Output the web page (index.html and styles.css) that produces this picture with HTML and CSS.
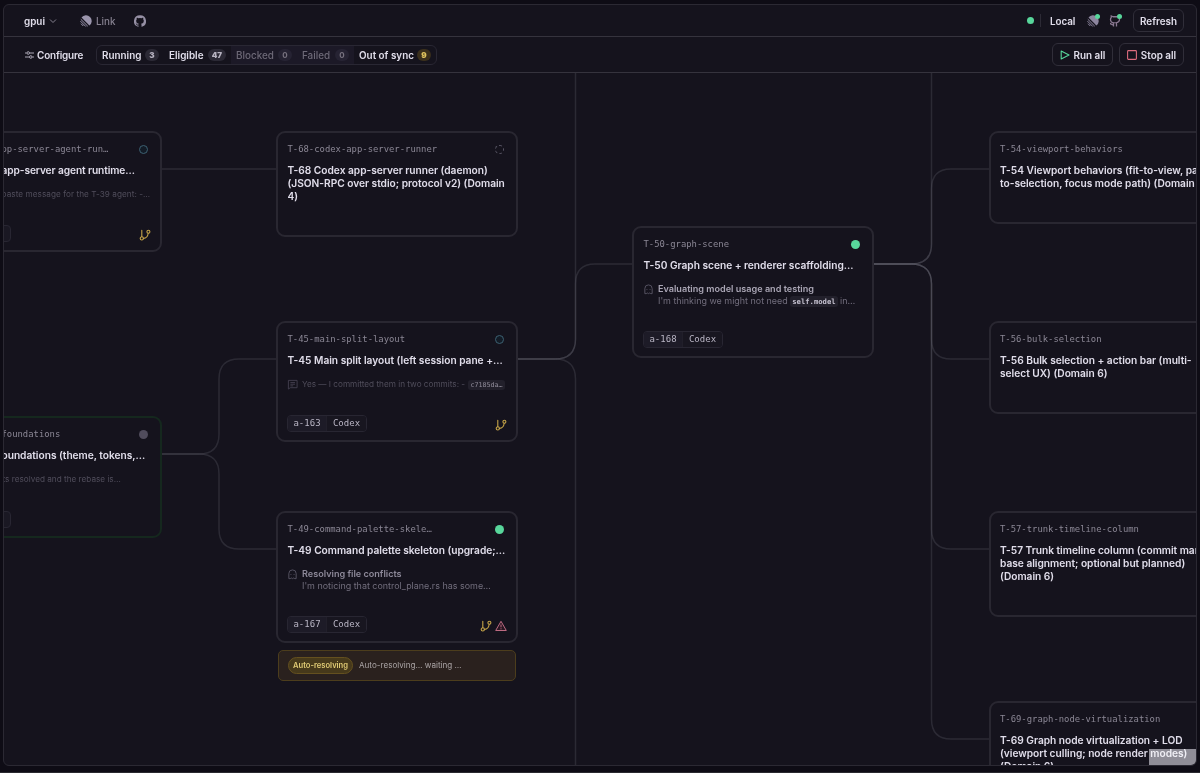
FILE: index.html
```
<!DOCTYPE html>
<html lang="en">
<head>
<meta charset="utf-8">
<title>gpui</title>
<link rel="stylesheet" href="styles.css">
</head>
<body>
<svg class="defs" width="0" height="0">
  <defs>
    <symbol id="linear" viewBox="0 0 24 24"><path fill="currentColor" d="M3 5.200A11.300 11.300 0 1 1 18.800 21Z"/><path d="M1.600 8.500 15.500 22.400M.9 12.300 11.700 23.100M2 17.400 6.600 22" stroke="currentColor" stroke-width="2" fill="none"/></symbol>
    <symbol id="github" viewBox="0 0 24 24"><path fill="currentColor" d="M12 .3a12 12 0 0 0-3.800 23.400c.6.1.8-.3.8-.6v-2c-3.300.7-4-1.600-4-1.600-.6-1.400-1.400-1.800-1.400-1.800-1-.7.1-.7.1-.7 1.200 0 1.900 1.200 1.900 1.200 1 1.800 2.800 1.300 3.500 1 0-.8.4-1.300.7-1.600-2.700-.3-5.500-1.300-5.500-6 0-1.200.5-2.300 1.300-3.100-.2-.4-.6-1.600 0-3.200 0 0 1-.3 3.400 1.200a11.500 11.500 0 0 1 6 0c2.300-1.500 3.300-1.200 3.300-1.200.6 1.600.2 2.800 0 3.200.9.8 1.300 1.900 1.300 3.200 0 4.600-2.800 5.600-5.500 5.900.5.4.9 1 .9 2.200v3.300c0 .3.1.7.8.6A12 12 0 0 0 12 .3"/></symbol>
    <symbol id="octo" viewBox="0 0 24 24"><path fill="none" stroke="currentColor" stroke-width="2.600" d="M15 23v-4.500c0-1.400-.4-2.200-1-2.900 4-.4 7-1.800 7-6.900 0-1.700-.5-3-1.500-4V2l-4 1.500h-7L4.500 2v3C3.500 6 3 7.200 3 8.800c0 5 3 6.400 7 6.800-.6.700-1 1.500-1 2.900V23M9 19.500c-3.500 1-4-2-7-2.500"/></symbol>
    <symbol id="branch" viewBox="0 0 12 12"><g fill="none" stroke="currentColor" stroke-width="1.100" stroke-linecap="round"><path d="M2.800 1.200v6.600M4.400 9.400C7 9.300 8.800 7.400 9.200 4.300"/><circle cx="2.800" cy="9.400" r="1.600"/><circle cx="9.400" cy="2.700" r="1.500"/></g></symbol>
    <symbol id="ghost" viewBox="0 0 12 12"><path fill="none" stroke="currentColor" d="M2 10.500V5a4 4 0 0 1 8 0v5.500H8.500L7.300 9.800 6 10.500 4.700 9.800 3.500 10.500Z"/><path stroke="currentColor" d="M4.300 5.500v.9M7.700 5.500v.9"/></symbol>
    <symbol id="message" viewBox="0 0 12 12"><path fill="none" stroke="currentColor" d="M1.500 1.500h9.500v8H3.500L1.500 11ZM3.700 3.900h5M3.700 5.700h5M3.700 7.500h3"/></symbol>
  </defs>
</svg>
<div class="window">
  <header class="bar top">
    <div class="group">
      <span class="project">gpui</span>
      <svg class="chev" viewBox="0 0 8 8"><path d="M1 2.500 4 5.500 7 2.500"/></svg>
      <svg class="lin"><use href="#linear"/></svg>
      <span class="link">Link</span>
      <svg class="gh"><use href="#github"/></svg>
    </div>
    <div class="group">
      <i class="live"></i><i class="sep"></i>
      <span class="local">Local</span>
      <span class="status"><svg><use href="#linear"/></svg><i></i></span>
      <span class="status second"><svg><use href="#octo"/></svg><i></i></span>
      <button class="btn refresh">Refresh</button>
    </div>
  </header>
  <div class="bar tools">
    <div class="group">
      <svg class="sliders" viewBox="0 0 9 8"><path d="M0 2h1.500M5 2h4M0 6h4M7.500 6H9"/><circle cx="3.200" cy="2" r="1.300"/><circle cx="5.800" cy="6" r="1.300"/></svg>
      <span class="configure">Configure</span>
      <div class="filters">
        <span class="filter running">Running<b>3</b></span>
        <span class="filter eligible">Eligible<b>47</b></span>
        <span class="filter blocked dim">Blocked<b>0</b></span>
        <span class="filter failed dim">Failed<b>0</b></span>
        <span class="filter sync">Out of sync<b class="gold">9</b></span>
      </div>
    </div>
    <div class="group">
      <button class="btn run"><svg viewBox="0 0 10 10"><path d="M1.200 1 9 5 1.200 9Z"/></svg>Run all</button>
      <button class="btn stop"><svg viewBox="0 0 10 10"><rect x=".6" y=".6" width="8.800" height="8.800" rx=".8"/></svg>Stop all</button>
    </div>
  </div>
  <main class="canvas">
    <div class="plane">
      <svg class="edges" width="1200" height="773">
        <path d="M161 169H277"/>
        <path d="M161 454H199Q219 454 219 434V379Q219 359 239 359H277"/>
        <path d="M161 454H199Q219 454 219 474V529Q219 549 239 549H277"/>
        <path d="M517 359H555Q575.500 359 575.500 339V60"/>
        <path d="M517 359H555Q575.500 359 575.500 339V284Q575.500 264 595 264H633"/>
        <path d="M517 359H555Q575.500 359 575.500 379V773"/>
        <path d="M873 264H911Q931.500 264 931.500 244V60"/>
        <path d="M873 264H911Q931.500 264 931.500 244V189Q931.500 169 951 169H990"/>
        <path d="M873 264H911Q931.500 264 931.500 284V339Q931.500 359 951 359H990"/>
        <path d="M873 264H911Q931.500 264 931.500 284V529Q931.500 549 951 549H990"/>
        <path d="M873 264H911Q931.500 264 931.500 284V719Q931.500 739 951 739H990"/>
      </svg>

      <article class="card t39">
        <div class="head"><span>pp-server-agent-run…</span><i class="dot ring"></i></div>
        <h3>app-server agent runtime…</h3>
        <div class="note faint"><p>paste message for the T-39 agent: -…</p></div>
        <div class="foot"><span class="chip stub"></span><svg class="br"><use href="#branch"/></svg></div>
      </article>

      <article class="card t40">
        <div class="head"><span>foundations</span><i class="dot gray"></i></div>
        <h3>oundations (theme, tokens,…</h3>
        <div class="note faint"><p>ts resolved and the rebase is…</p></div>
        <div class="foot"><span class="chip stub"></span></div>
      </article>

      <article class="card t68">
        <div class="head"><span>T-68-codex-app-server-runner</span><i class="dot dashed"></i></div>
        <h3>T-68 Codex app-server runner (daemon)<br>(JSON-RPC over stdio; protocol v2) (Domain<br>4)</h3>
      </article>

      <article class="card t45">
        <div class="head"><span>T-45-main-split-layout</span><i class="dot ring"></i></div>
        <h3>T-45 Main split layout (left session pane +…</h3>
        <div class="note faint"><svg><use href="#message"/></svg><p>Yes — I committed them in two commits: - <code>c7185da…</code></p></div>
        <div class="foot"><span class="chip"><b>a-163</b><em>Codex</em></span><svg class="br"><use href="#branch"/></svg></div>
      </article>

      <article class="card t49">
        <div class="head"><span>T-49-command-palette-skele…</span><i class="dot green"></i></div>
        <h3>T-49 Command palette skeleton (upgrade;…</h3>
        <div class="note"><svg><use href="#ghost"/></svg><p><strong>Resolving file conflicts</strong><br>I'm noticing that control_plane.rs has some…</p></div>
        <div class="foot"><span class="chip"><b>a-167</b><em>Codex</em></span><svg class="br"><use href="#branch"/></svg><svg class="warn" viewBox="0 0 12 12"><path d="M6 1.300 11.300 10.500H.7ZM6 4.500v2.800M6 8.300v1"/></svg></div>
      </article>
      <div class="resolve"><b>Auto-resolving</b><span>Auto-resolving… waiting …</span></div>

      <article class="card t50">
        <div class="head"><span>T-50-graph-scene</span><i class="dot green"></i></div>
        <h3>T-50 Graph scene + renderer scaffolding…</h3>
        <div class="note bright"><svg><use href="#ghost"/></svg><p><strong>Evaluating model usage and testing</strong><br>I'm thinking we might not need <code>self.model</code> in…</p></div>
        <div class="foot"><span class="chip"><b>a-168</b><em>Codex</em></span></div>
      </article>

      <article class="card t54">
        <div class="head"><span>T-54-viewport-behaviors</span></div>
        <h3>T-54 Viewport behaviors (fit-to-view, pa<br>to-selection, focus mode path) (Domain</h3>
      </article>
      <article class="card t56">
        <div class="head"><span>T-56-bulk-selection</span></div>
        <h3>T-56 Bulk selection + action bar (multi-<br>select UX) (Domain 6)</h3>
      </article>
      <article class="card t57">
        <div class="head"><span>T-57-trunk-timeline-column</span></div>
        <h3>T-57 Trunk timeline column (commit mar<br>base alignment; optional but planned)<br>(Domain 6)</h3>
      </article>
      <article class="card t69">
        <div class="head"><span>T-69-graph-node-virtualization</span></div>
        <h3>T-69 Graph node virtualization + LOD<br>(viewport culling; node render modes)<br>(Domain 6)</h3>
      </article>
    </div>
    <div class="minimap"></div>
  </main>
</div>
</body>
</html>
```
FILE: styles.css
```
* { box-sizing: border-box; }
body {
  margin: 0;
  height: 773px;
  padding: 4px 3px 7px 3px;
  overflow: hidden;
  background: #0e0c15;
  border-bottom: 1px solid #2a2930;
  font-family: Inter, "Liberation Sans", sans-serif;
  color: #e0ddea;
}
.defs { position: absolute; }
.window {
  height: 762px;
  border: 1px solid #2b2933;
  border-radius: 6px;
  overflow: hidden;
  background: #15131d;
  display: flex;
  flex-direction: column;
}
.bar { display: flex; justify-content: space-between; flex: none; border-bottom: 1px solid #35333d; }
.top { height: 32px; padding: 0 12px 0 20px; }
.tools { height: 36px; padding: 0 12px 0 21px; }
.group { display: flex; align-items: center; white-space: nowrap; font-size: 9.900px; font-weight: 600; }
svg { display: block; flex: none; }
.project { width: 21px; }
.chev { width: 8px; height: 8px; margin-left: 4px; fill: none; stroke: #85818f; }
.lin { width: 12px; height: 12px; margin-left: 23px; color: #9b95ad; }
.link { margin-left: 4px; width: 20px; color: #85808f; font-weight: 500; }
.gh { width: 12px; height: 12px; margin-left: 18px; color: #9690a5; }
.live { width: 7px; height: 7px; border-radius: 50%; background: #58d69b; }
.sep { width: 1px; height: 13px; margin-left: 6px; background: #2c2a35; }
.local { margin-left: 9px; width: 26px; letter-spacing: -.1px; }
.status { position: relative; margin-left: 11px; color: #8c859e; }
.status svg { width: 12px; height: 12px; }
.status.second { margin-left: 10px; color: #8a7891; }
.status i { position: absolute; right: -1px; top: -1px; width: 5px; height: 5px; border-radius: 50%; background: #58d69b; }
.btn {
  font: 600 9.900px Inter, sans-serif;
  height: 23px;
  padding: 0;
  display: flex;
  align-items: center;
  justify-content: center;
  color: #e0ddea;
  background: #15131d;
  border: 1px solid #302e39;
  border-radius: 6px;
}
.btn svg { width: 10px; height: 10px; fill: none; stroke-width: 1.100; stroke-linejoin: round; margin-right: 4px; }
.refresh { width: 51px; margin-left: 12px; }
.run { width: 61px; }
.run svg { stroke: #58d69b; }
.stop { width: 65px; margin-left: 6px; }
.stop svg { stroke: #dc6b7d; }
.sliders { width: 9px; height: 8px; fill: none; stroke: #bcb8c6; stroke-width: .9; }
.configure { margin-left: 3px; width: 47px; letter-spacing: -.15px; }
.filters {
  display: flex;
  height: 20px;
  margin-left: 12px;
  border: 1px solid #292733;
  border-radius: 6px;
  overflow: hidden;
}
.filter { display: flex; align-items: center; justify-content: space-between; padding: 0 5px; }
.filter b { font-size: 8px; min-width: 14px; padding: 0 4px; line-height: 12px; border-radius: 6px; text-align: center; background: #2b2935; color: #b7b3c1; }
.filter.running { width: 67px; }
.filter.eligible { width: 67px; }
.filter.blocked { width: 66px; }
.filter.failed { width: 57px; }
.filter.sync { width: 82px; }
.filter.dim { background: #1c1927; color: #6d6977; font-weight: 500; }
.filter.dim b { background: #262333; color: #77727f; }
.filter b.gold { background: #3a2f1c; color: #dfc35e; }
.canvas { position: relative; flex: 1; overflow: hidden; }
.plane { position: absolute; left: -4px; top: -73px; width: 1200px; height: 773px; }
.edges { position: absolute; left: 0; top: 0; fill: none; stroke: rgba(112, 110, 124, .25); stroke-width: 1.500; }
.card {
  position: absolute;
  width: 242px;
  padding: 10px 9px 8px 9.500px;
  background: #15131d;
  border: 2px solid #292731;
  border-radius: 9px;
  display: flex;
  flex-direction: column;
}
.t39, .t40 { left: -10px; width: 172px; }
.t39 { top: 131px; height: 121px; }
.t40 { top: 416px; height: 122px; border-color: #15281e; }
.t68 { left: 276px; top: 131px; height: 106px; }
.t45 { left: 276px; top: 321px; height: 121px; }
.t49 { left: 276px; top: 511px; height: 132px; }
.t50 { left: 632px; top: 226px; height: 132px; }
.t54 { left: 988.500px; top: 131px; height: 93px; }
.t56 { left: 988.500px; top: 321px; height: 93px; }
.t57 { left: 988.500px; top: 511px; height: 106px; }
.t69 { left: 988.500px; top: 701px; height: 106px; }
.head {
  display: flex;
  justify-content: space-between;
  align-items: center;
  height: 12px;
  padding-right: 3px;
  font: 8.900px "DejaVu Sans Mono", monospace;
  color: #8b8795;
  white-space: nowrap;
}
h3 { margin: 9px 0 0; font-size: 10.200px; line-height: 13px; font-weight: 600; white-space: nowrap; letter-spacing: -.02px; }
.t39 h3 { letter-spacing: -.1px; }
.dot { width: 9px; height: 9px; border-radius: 50%; }
.ring { border: 1px solid #3d6172; background: #131b26; }
.dashed { border: 1px dashed #5a5766; }
.green { background: #58d69b; }
.gray { background: #504c5c; }
.note { display: flex; margin-top: 11px; font-size: 8.950px; line-height: 12px; color: #726e7d; white-space: nowrap; }
.note p { margin: 0; }
.note svg { width: 11px; height: 11px; margin: 1px 4px 0 -.5px; color: #5a5666; }
.note strong { font-weight: 600; font-size: 9.100px; color: #8d8999; }
.note.bright strong { color: #aaa6b5; }
.note.faint { font-size: 8.200px; color: #504d5b; }
.t39 .note { letter-spacing: .05px; }
.note.faint svg { color: #444150; }
.t40 .note { padding-left: 1px; }
.note code { font: 700 7.200px/10px "DejaVu Sans Mono", monospace; padding: 1px 2px; background: #22202b; border-radius: 3px; color: #c4c0cf; }
.note.faint code { font-size: 6.700px; font-weight: 400; color: #918d9b; padding: 1px 2px; margin-left: 1px; }
.foot { display: flex; margin-top: auto; align-items: flex-end; height: 17px; }
.chip { display: flex; margin: 0 auto 0 -.5px; height: 17px; border: 1px solid #282632; border-radius: 4px; overflow: hidden; font: 9px/15px "DejaVu Sans Mono", monospace; color: #b9b5c4; }
.chip b { width: 39px; text-align: center; font-weight: 400; background: #1d1b27; border-right: 1px solid #211f2a; }
.chip em { width: 39px; text-align: center; font-style: normal; background: #181620; }
.chip.stub { width: 20px; margin-left: -11px; background: #1a1823; }
.br { width: 12px; height: 12px; color: #c6a548; position: relative; top: -1px; }
.warn { width: 12px; height: 12px; margin-left: 3px; position: relative; top: -1px; fill: #2a1722; stroke: #bd6b82; stroke-linejoin: round; }
.resolve {
  position: absolute;
  left: 278px;
  top: 650px;
  width: 238px;
  height: 31px;
  padding: 0 0 1px 9px;
  display: flex;
  align-items: center;
  background: #2a211e;
  border: 1px solid #4c3d1c;
  border-radius: 5px;
  font-size: 8.100px;
  color: #aaa4a5;
  white-space: nowrap;
}
.resolve b { width: 65px; height: 17px; line-height: 15px; text-align: center; font-size: 7.600px; font-weight: 600; color: #e0cb75; background: #46391b; border: 1px solid #64501f; border-radius: 9px; margin-right: 6px; }
.minimap { position: absolute; left: 1145px; top: 676px; width: 48px; height: 17px; background: #85848a; mix-blend-mode: screen; }
```
